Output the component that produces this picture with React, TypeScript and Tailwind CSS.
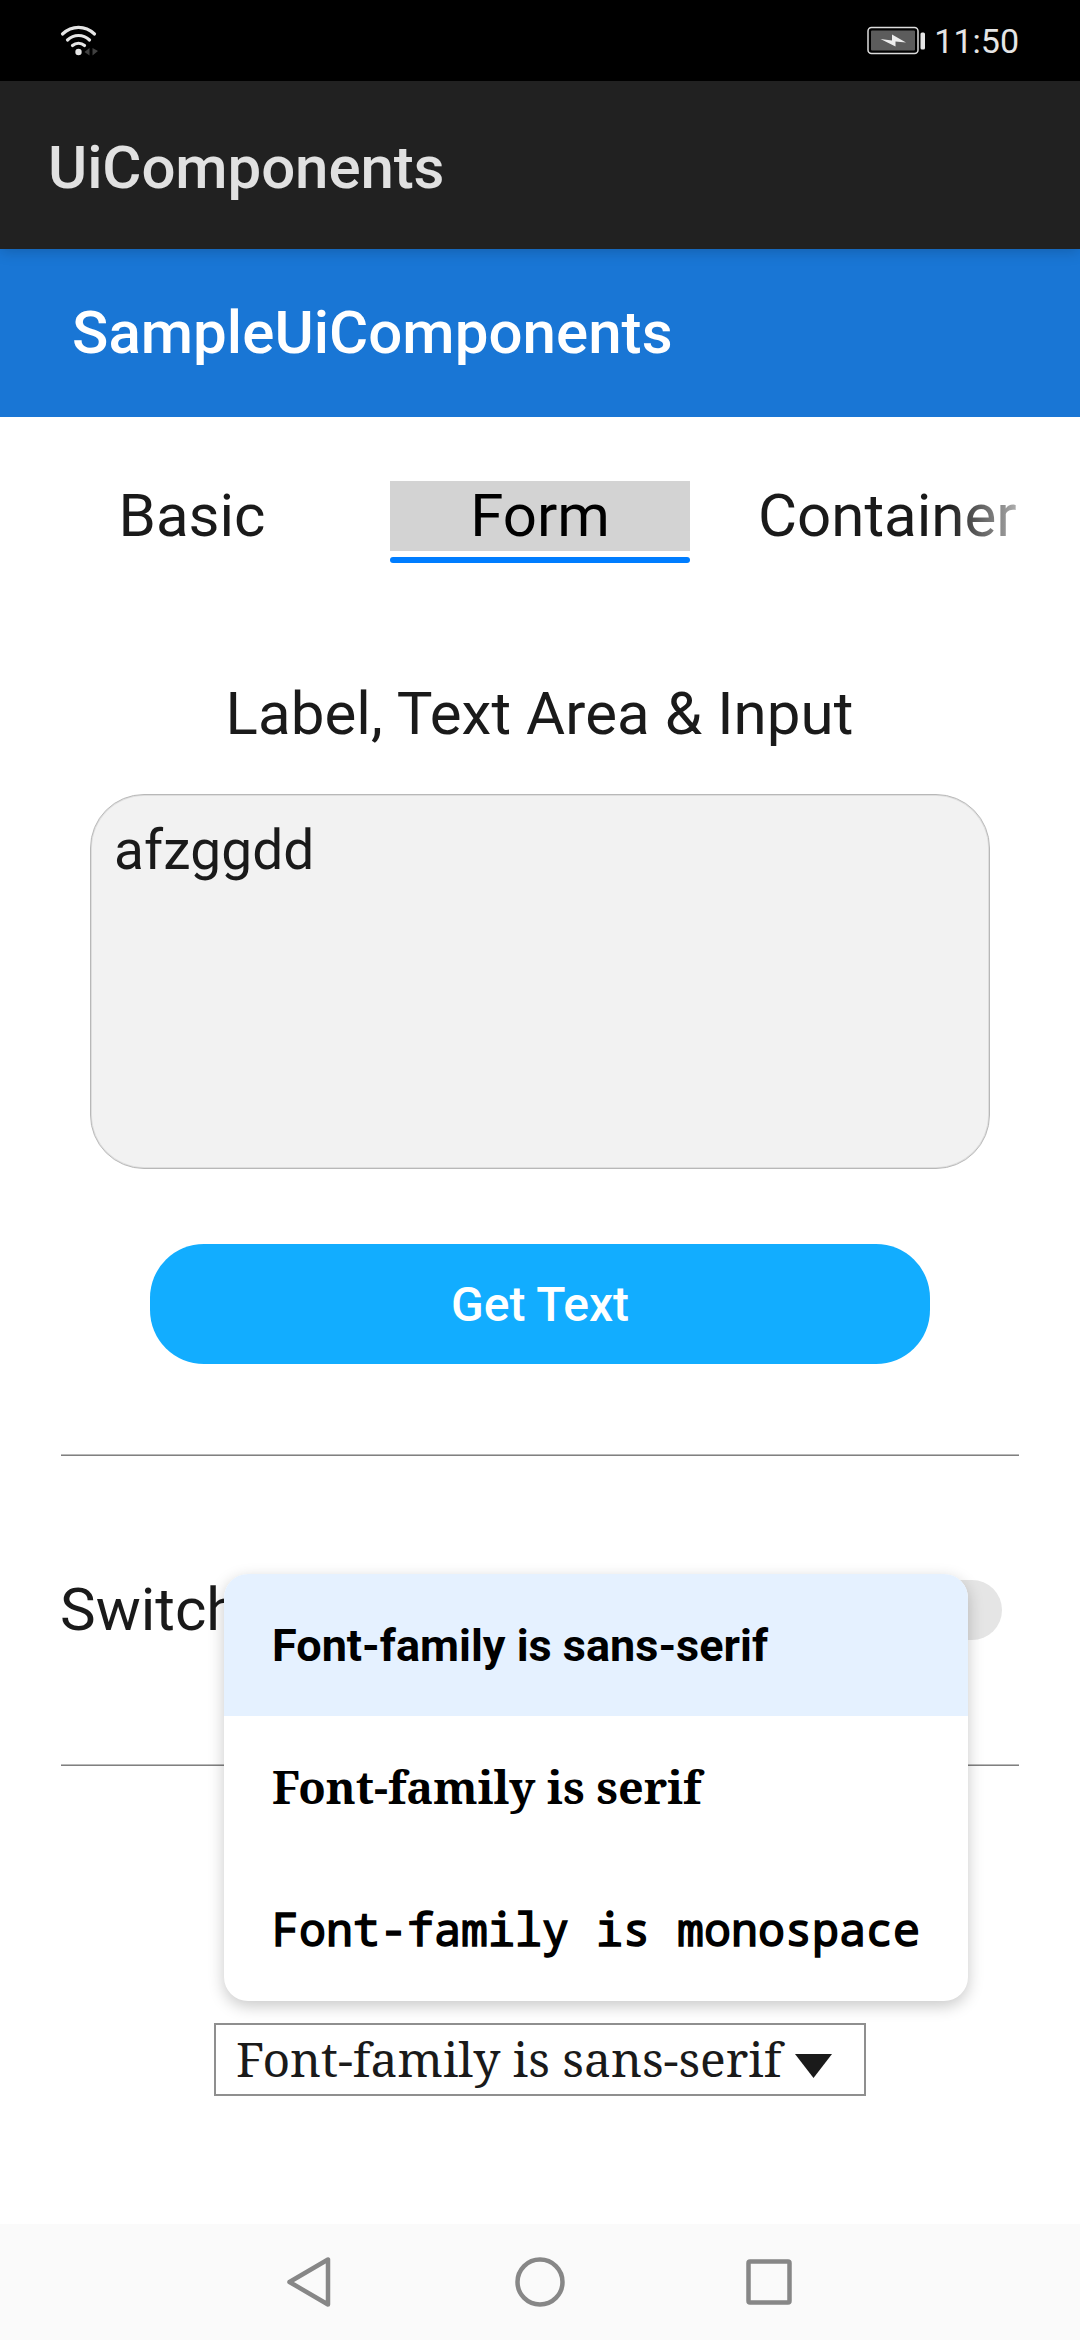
const options = [
  { label: 'Font-family is sans-serif', style: 'bg-[#e5f1ff] text-[45px] font-bold pt-[2px]' },
  { label: 'Font-family is serif', style: 'font-["Noto_Serif","DejaVu_Serif_Condensed","DejaVu_Serif",serif] text-[45px] font-bold pb-[1px]' },
  { label: 'Font-family is monospace', style: 'font-["Droid_Sans_Mono","Noto_Sans_Mono","DejaVu_Sans_Mono",monospace] text-[45px] [-webkit-text-stroke:1.5px_black] pb-[1px]' },
];

function Divider() {
  return (
    <div className="mx-[61px]">
      <div className="h-px bg-[#b9b9b9]" />
      <div className="h-px bg-[#808080]" />
    </div>
  );
}

export default function App() {
  return (
    <div className="relative flex h-[2340px] w-[1080px] flex-col overflow-hidden bg-white font-[Roboto,sans-serif] text-[60px] leading-[70px] text-[#1a1a1a]">
      <div className="flex h-[81px] items-center justify-between bg-black pr-[61px] pl-[60px] text-[#e5e5e5]">
        <svg width="40" height="33" viewBox="0 0 40 33" fill="none" stroke="#e6e6e6" strokeWidth="3.2" strokeLinecap="round">
          <path d="M2.5 10C12 1.2 25 1.2 34.500 10" />
          <path d="M7.500 16C14 10 23 10 29.500 16" />
          <path d="M12.500 21.500C16 18.500 21 18.500 24.500 21.500" />
          <circle cx="18.500" cy="28" r="3.200" fill="#e6e6e6" stroke="none" />
          <path d="M29.500 24v7.500L24.500 28zM32.500 24v7.500L38 27z" fill="#404040" stroke="none" />
        </svg>
        <div className="flex items-center gap-[8px]">
          <svg width="59" height="29" viewBox="0 0 59 29" fill="none">
            <rect x="1" y="1.500" width="50" height="26" rx="3.500" stroke="#dcdcdc" strokeWidth="1.500" />
            <rect x="4" y="4.500" width="44" height="20" rx="1" fill="#5c5c5c" />
            <path d="M13.500 13L25 14.500V8.500L39 16.500L28.500 15.500V20.500z" fill="#ededed" />
            <rect x="53.500" y="6.500" width="4.500" height="17" rx="1.500" fill="#e6e6e6" />
          </svg>
          <span className="pt-[1px] text-[34px] leading-[40px]">11:50</span>
        </div>
      </div>

      <header className="relative z-10 flex h-[168px] items-center bg-[#212121] pt-[5px] pl-[48px] font-medium tracking-[-0.1px] text-[#e1e1e1] shadow-[0_2px_14px_rgba(0,0,0,0.2)]">UiComponents</header>
      <div className="flex h-[168px] items-center bg-[#1976d5] pl-[72px] font-medium tracking-[0.05px] text-white">SampleUiComponents</div>

      <nav className="mt-[64px] ml-[42px] flex h-[83px] w-[978px] overflow-hidden">
        <div className="w-[300px] shrink-0 text-center">Basic</div>
        <div className="ml-[48px] w-[300px] shrink-0 text-center text-black">
          <div className="h-[70px] bg-[#d3d3d3]">Form</div>
          <div className="mt-[6px] h-[6px] rounded-[3px] bg-[#007dff]" />
        </div>
        <div className="ml-[46px] w-[300px] shrink-0 bg-[linear-gradient(to_right,#1a1a1a_210px,#b4b4b4_284px)] bg-clip-text pl-[22px] text-transparent">Container</div>
      </nav>

      <h1 className="mt-[115px] mr-[1px] text-center tracking-[0.08px]">Label, Text Area &amp; Input</h1>
      <div className="mx-[90px] mt-[45px] h-[375px] rounded-[54px] border border-[#b8b8b8] bg-[#f2f2f2] px-[23px] pt-[20px] text-[55px] tracking-[0.1px] shadow-[inset_0_0_0_1px_#dedede]">afzggdd</div>
      <button className="mx-[150px] mt-[75px] h-[120px] rounded-[54px] bg-[#12adff] pt-[2px] text-[48px] font-medium text-white">Get Text</button>
      <div className="h-[90px]" />
      <Divider />
      <div className="flex h-[308px] items-center justify-between pr-[78px] pl-[60px]">
        <span>Switch</span>
        <div className="h-[60px] w-[108px] rounded-full bg-[#e5e5e5]" />
      </div>
      <Divider />

      <div className="mt-[257px] ml-[214px] flex h-[73px] w-[652px] items-center border-2 border-[#8f8f8f] pl-[20px] font-['Noto_Serif','DejaVu_Serif_Condensed','DejaVu_Serif',serif] text-[48px]">
        <span className="pb-[1px] whitespace-nowrap">Font-family is sans-serif</span>
        <svg className="mt-[12px] ml-[14px]" width="37" height="24" viewBox="0 0 37 24">
          <path d="M0 0H37L18.500 24z" fill="#1a1a1a" />
        </svg>
      </div>

      <div className="absolute top-[1574px] left-[224px] w-[744px] overflow-hidden rounded-[24px] bg-white text-black shadow-[0_5px_16px_rgba(0,0,0,0.22)]">
        {options.map((o) => (
          <div key={o.label} className={`flex h-[142.400px] items-center pl-[48px] whitespace-nowrap ${o.style}`}>{o.label}</div>
        ))}
      </div>

      <footer className="mt-auto flex h-[116px] items-center justify-between bg-[#fafafa] px-[285px]">
        <svg width="48" height="54" viewBox="0 0 48 54" fill="none" stroke="#878787" strokeWidth="4.500" strokeLinejoin="round">
          <path d="M43 4.500V49.500L4.500 27z" />
        </svg>
        <svg width="54" height="54" viewBox="0 0 54 54" fill="none" stroke="#878787" strokeWidth="4.500">
          <circle cx="28" cy="27" r="22.500" />
        </svg>
        <svg width="50" height="54" viewBox="0 0 50 54" fill="none" stroke="#878787" strokeWidth="4.500">
          <rect x="3.500" y="6.500" width="41" height="41" rx="1.500" />
        </svg>
      </footer>
    </div>
  );
}
